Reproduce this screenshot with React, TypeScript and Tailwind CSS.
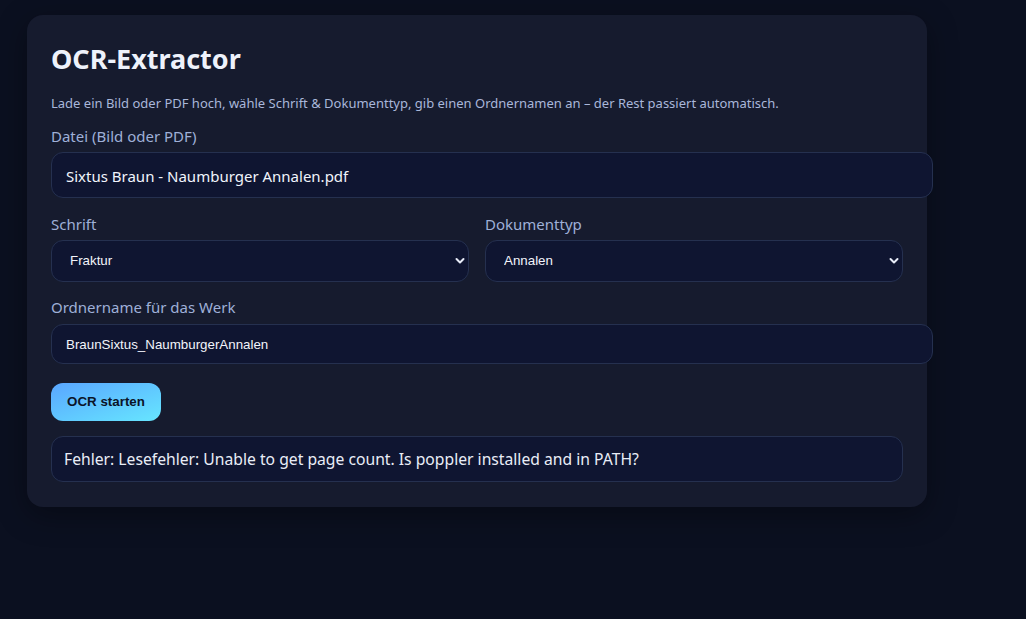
import React, { useState } from "react";

const Chevron = () => (
  <svg
    className="pointer-events-none absolute right-[4px] top-1/2 -translate-y-1/2"
    width="10"
    height="7"
    viewBox="0 0 10 7"
    fill="none"
  >
    <path d="M1.5 1.5 L5 5 L8.5 1.5" stroke="#e8ecf8" strokeWidth="2" strokeLinecap="round" strokeLinejoin="round" />
  </svg>
);

const App = () => {
  const [schrift, setSchrift] = useState("Fraktur");
  const [typ, setTyp] = useState("Annalen");
  const [folder, setFolder] = useState("BraunSixtus_NaumburgerAnnalen");

  return (
    <div className="min-h-[619px] w-full bg-[#0b1020] pt-[15px] pl-[27px] font-['Noto_Sans','Open_Sans',sans-serif]">
      <div className="w-[900px] rounded-2xl bg-[#161b2e] px-6 pt-[26px] pb-[25px] shadow-[0_8px_30px_rgba(0,0,0,0.35)]">
        <h1 className="text-[27px] font-bold leading-[36px] text-[#eef2fb]">OCR-Extractor</h1>
        <p className="mt-[17px] text-[13px] leading-[18px] text-[#a9b7da]">
          Lade ein Bild oder PDF hoch, wähle Schrift &amp; Dokumenttyp, gib einen Ordnernamen an – der Rest passiert automatisch.
        </p>

        <label className="mt-[13px] block text-[15px] leading-[22px] text-[#9fb0d8]">Datei (Bild oder PDF)</label>
        <div className="mt-[5px] box-content h-[44px] w-full rounded-xl border border-[#25304f] bg-[#0f1531] px-[14px] text-[15px] leading-[46px] text-[#f1f4fc]">
          Sixtus Braun - Naumburger Annalen.pdf
        </div>

        <div className="mt-[15px] grid grid-cols-2 gap-4">
          <div>
            <label className="block text-[15px] leading-[22px] text-[#9fb0d8]">Schrift</label>
            <div className="relative mt-[5px]">
              <select
                value={schrift}
                onChange={e => setSchrift(e.target.value)}
                className="h-[42px] w-full appearance-none rounded-xl border border-[#25304f] bg-[#0f1531] pl-[18px] font-['Liberation_Sans',Arial,sans-serif] text-[13.33px] text-[#f2f4fb] outline-none"
              >
                <option>Fraktur</option>
                <option>Antiqua</option>
              </select>
              <Chevron />
            </div>
          </div>
          <div>
            <label className="block text-[15px] leading-[22px] text-[#9fb0d8]">Dokumenttyp</label>
            <div className="relative mt-[5px]">
              <select
                value={typ}
                onChange={e => setTyp(e.target.value)}
                className="h-[42px] w-full appearance-none rounded-xl border border-[#25304f] bg-[#0f1531] pl-[18px] font-['Liberation_Sans',Arial,sans-serif] text-[13.33px] text-[#f2f4fb] outline-none"
              >
                <option>Annalen</option>
                <option>Chronik</option>
                <option>Urkunde</option>
              </select>
              <Chevron />
            </div>
          </div>
        </div>

        <label className="mt-[14px] block text-[15px] leading-[22px] text-[#9fb0d8]">Ordnername für das Werk</label>
        <input
          value={folder}
          onChange={e => setFolder(e.target.value)}
          className="mt-[6px] box-content block h-[38px] w-full rounded-xl border border-[#25304f] bg-[#0f1531] px-[14px] font-['Liberation_Sans',Arial,sans-serif] text-[13.33px] text-[#f2f4fb] outline-none"
        />

        <button className="mt-[19px] block h-[38px] w-[110px] rounded-xl bg-gradient-to-br from-[#5aa6ff] to-[#67e6ff] font-['Liberation_Sans',Arial,sans-serif] text-[13.33px] font-bold text-[#0b1428]">
          OCR starten
        </button>

        <div className="mt-[15px] h-[46px] rounded-xl border border-[#25304f] bg-[#0f1531] px-3 text-[15.7px] leading-[44px] text-[#e9edf7]">
          Fehler: Lesefehler: Unable to get page count. Is poppler installed and in PATH?
        </div>
      </div>
    </div>
  );
};

export default App;
